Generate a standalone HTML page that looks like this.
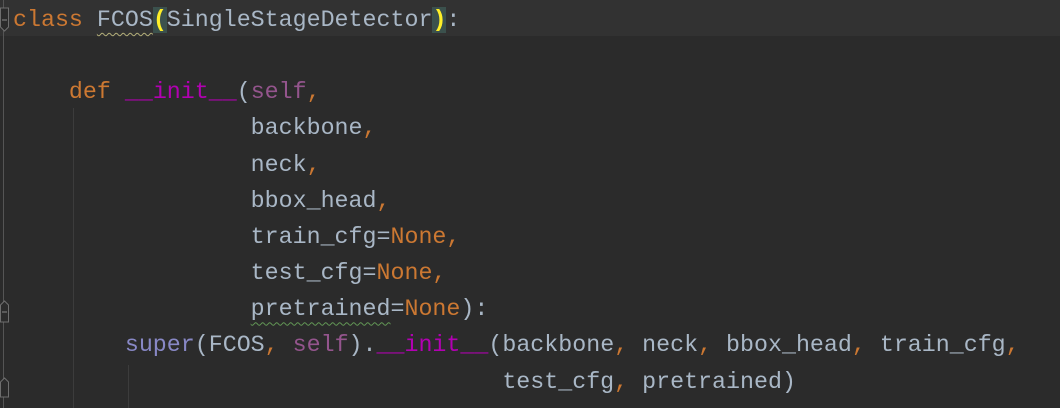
<!DOCTYPE html>
<html><head><meta charset="utf-8"><style>
html,body{margin:0;padding:0;width:1060px;height:408px;overflow:hidden;background:#2b2b2b;}
.code{position:absolute;left:13px;top:2px;font-family:"Liberation Mono",monospace;font-size:23.3px;line-height:36.15px;color:#a9b7c6;white-space:pre;}
.hl{position:absolute;left:0;top:0;width:1060px;height:36px;background:#323232;}
.k{color:#cc7832}.s{color:#94558d}.m{color:#b200b2}.b{color:#8888c6}
.pm{background:#3b514d;color:#ffef28;font-weight:bold}
.w1{text-decoration:underline wavy #b5b07a;text-decoration-thickness:1px;text-underline-offset:6px}
.w2{text-decoration:underline wavy #629755;text-decoration-thickness:1px;text-underline-offset:6px}
.g{position:absolute;width:1px;background:#3c3c3c}
</style></head><body>
<div class="hl"></div>
<div class="g" style="left:3px;top:0;height:408px;background:#555"></div>
<div class="g" style="left:73px;top:108px;height:300px"></div>
<div class="g" style="left:128px;top:365px;height:43px"></div>
<svg style="position:absolute;left:0;top:0" width="12" height="408">
<path d="M0.5 8 H8.5 V27 L4.5 31 L0.5 27 Z" fill="#2b2b2b" stroke="#6e6e6e"/><line x1="2" y1="20" x2="7" y2="20" stroke="#8a8a8a"/>
<path d="M0.5 322 H8.5 V305 L4.5 301 L0.5 305 Z" fill="#2b2b2b" stroke="#6e6e6e"/><line x1="2" y1="312" x2="7" y2="312" stroke="#8a8a8a"/>
<path d="M0.5 397 H8.5 V382 L4.5 378 L0.5 382 Z" fill="#2b2b2b" stroke="#6e6e6e"/>
</svg>
<div class="code"><span class="k">class</span> <span class="w1">FCOS</span><span class="pm">(</span>SingleStageDetector<span class="pm">)</span>:

    <span class="k">def</span> <span class="m">__init__</span>(<span class="s">self</span><span class="k">,</span>
                 backbone<span class="k">,</span>
                 neck<span class="k">,</span>
                 bbox_head<span class="k">,</span>
                 train_cfg=<span class="k">None,</span>
                 test_cfg=<span class="k">None,</span>
                 <span class="w2">pretrained</span>=<span class="k">None</span>):
        <span class="b">super</span>(FCOS<span class="k">,</span> <span class="s">self</span>).<span class="m">__init__</span>(backbone<span class="k">,</span> neck<span class="k">,</span> bbox_head<span class="k">,</span> train_cfg<span class="k">,</span>
                                   test_cfg<span class="k">,</span> pretrained)</div>
</body></html>
